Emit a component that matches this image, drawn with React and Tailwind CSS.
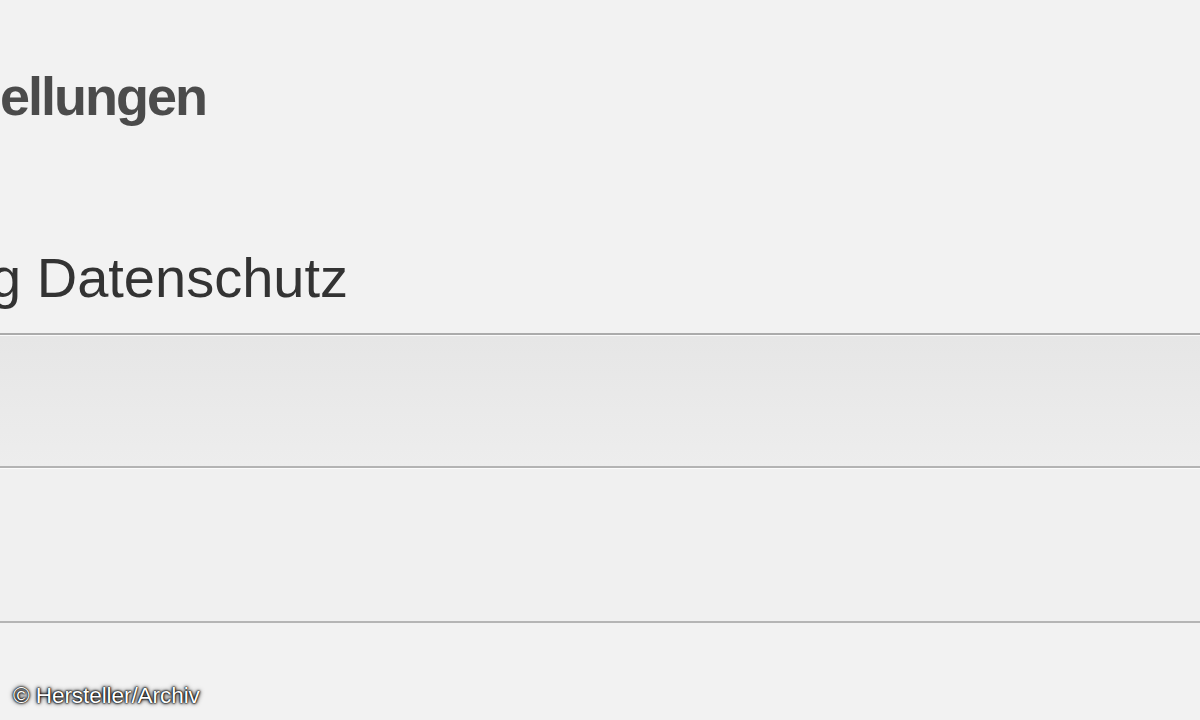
import React from 'react';

export default function App() {
  return (
    <div className="relative h-[720px] w-[1200px] overflow-hidden bg-[#f2f2f2] font-['Liberation_Sans',Arial,sans-serif]">
      {/* Section header */}
      <div className="h-[250px] pt-[69px]">
        <h1 className="text-[54px] leading-none font-bold tracking-[-2px] text-[#4b4b4b]">ellungen</h1>
      </div>

      {/* Selected item label */}
      <div className="h-[83px] overflow-hidden">
        <p className="whitespace-nowrap text-[56px] leading-none text-[#333333] -ml-[10px]">g Datenschutz</p>
      </div>

      {/* List rows */}
      <div className="h-[2px] bg-[#ababab]" />
      <div className="h-[131px] border-t border-white/70 bg-gradient-to-b from-[#e6e6e6] to-[#ededed]" />
      <div className="h-[2px] bg-[#b3b3b3]" />
      <div className="h-[153px] border-t border-white/70 bg-[#f0f0f0]" />
      <div className="h-[2px] bg-[#b5b5b5]" />

      {/* Photo credit */}
      <div className="pt-[62px] pl-[13px]">
        <span className="text-[22.6px] leading-none tracking-[-0.1px] text-white [text-shadow:0_0_5px_#000,0_0_3px_#000,0_0_2px_#000,0_0_1px_#000]">
          © Hersteller/Archiv
        </span>
      </div>
    </div>
  );
}
